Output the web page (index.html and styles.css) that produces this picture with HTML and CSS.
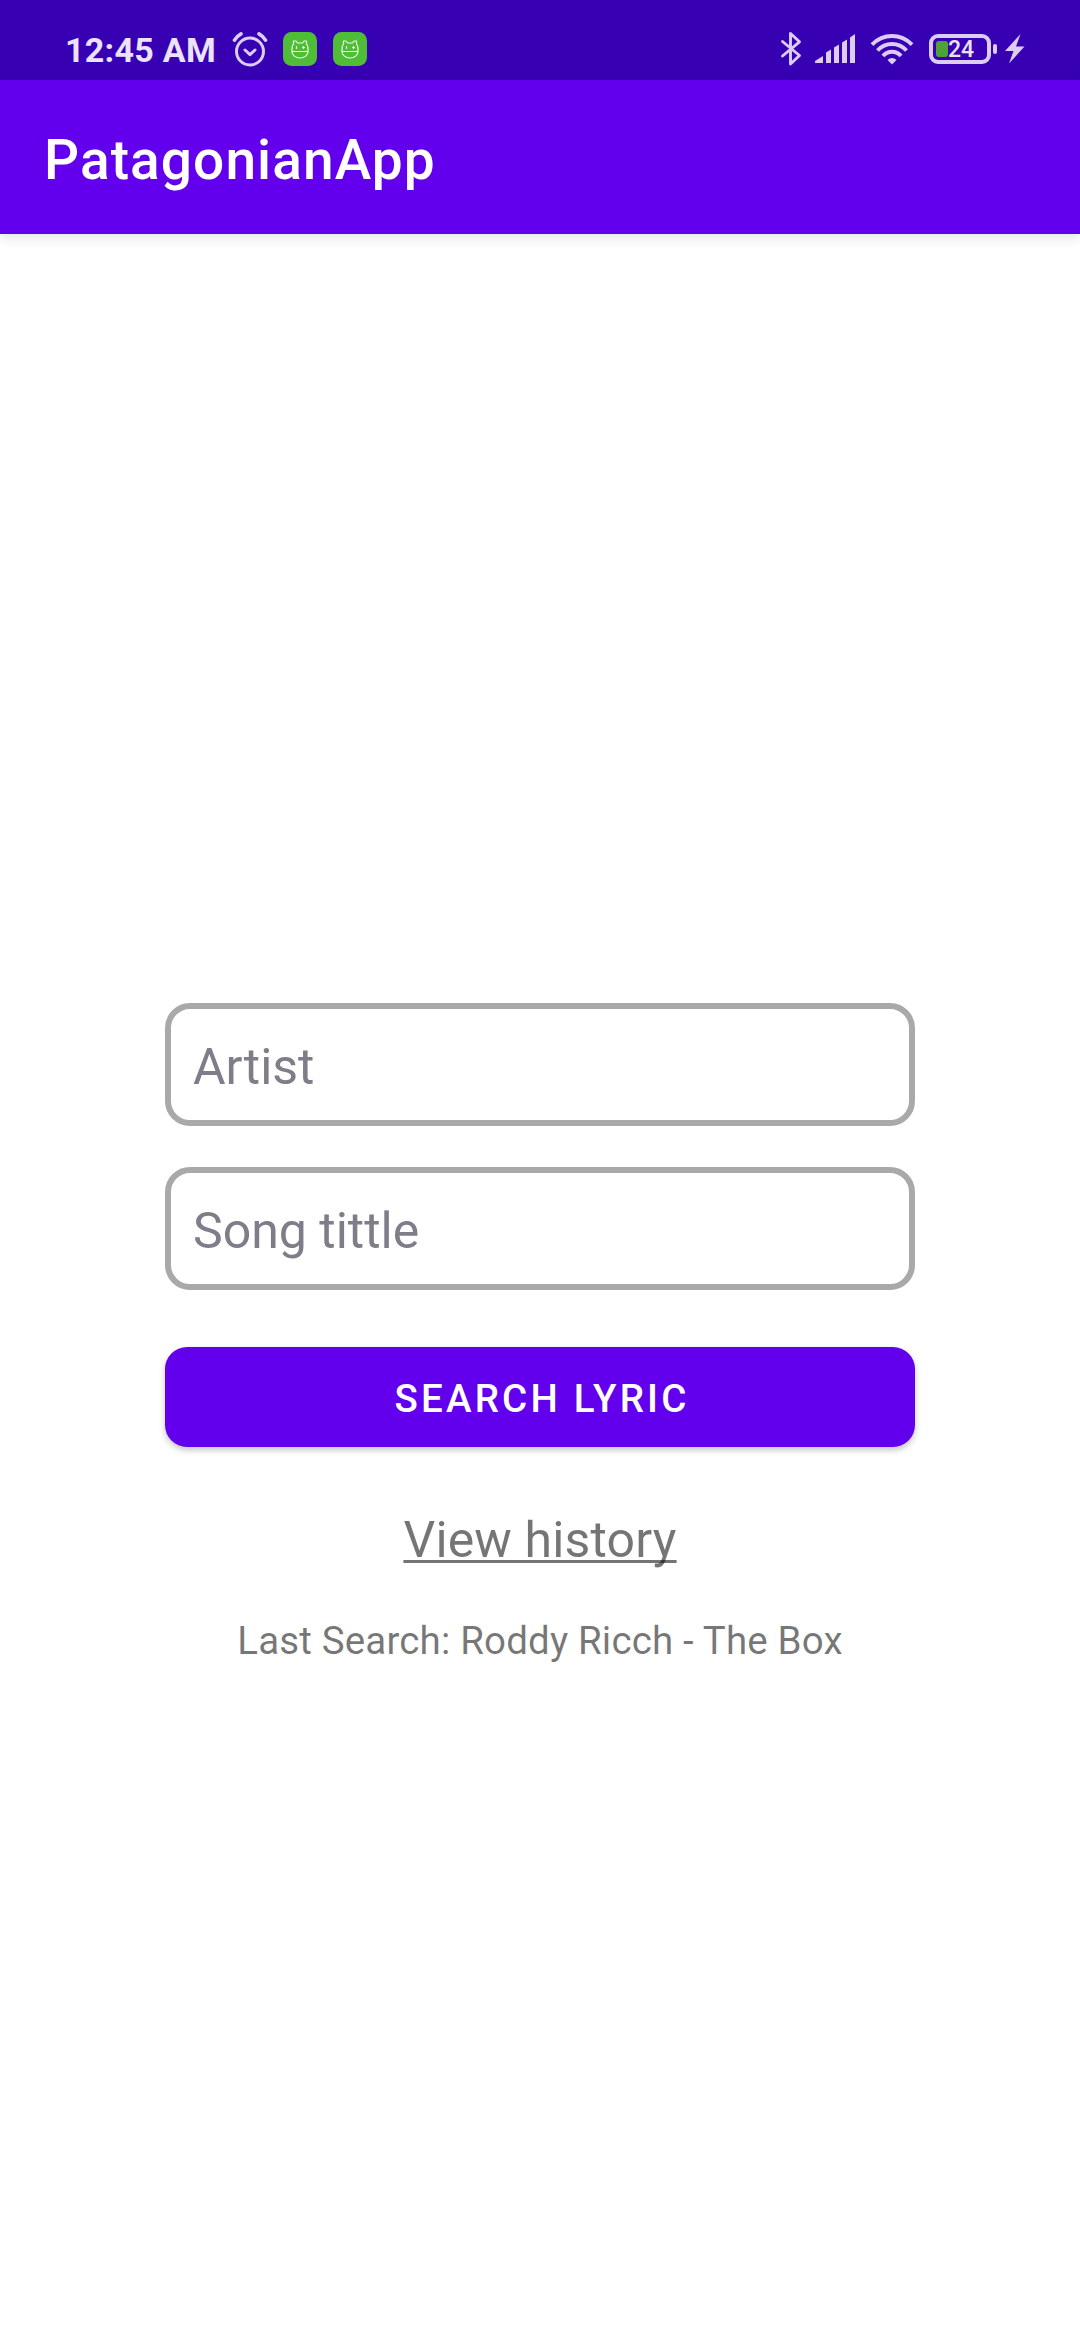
FILE: index.html
```html
<!DOCTYPE html>
<html lang="en">
<head>
<meta charset="utf-8">
<title>PatagonianApp</title>
<link rel="stylesheet" href="styles.css">
</head>
<body>
<div class="status-bar">
  <div class="status-group">
    <span class="clock">12:45 AM</span>
    <svg class="icon alarm" width="36" height="36" viewBox="0 0 36 36" fill="none" stroke="#dccdf6" stroke-linecap="round" stroke-linejoin="round">
      <circle cx="18" cy="20.500" r="13.500" stroke-width="3"/>
      <path d="M13 19l5 4.600 5-4.600" stroke-width="3"/>
      <path d="M2.500 9.200Q5 5 9 2.800M33.500 9.200Q31 5 27 2.800" stroke-width="3.600"/>
    </svg>
    <svg class="icon app-badge" width="34" height="34" viewBox="0 0 34 34">
      <rect width="34" height="34" rx="8.500" fill="#4fbe36"/>
      <g fill="none" stroke="#e9f9e5" stroke-width="1.200" stroke-linejoin="round">
        <path d="M9 19.500V16q0-2 1.500-4V9H13l1.500 2h5L21 9h2.500v3q1.500 2 1.500 4v3.500A8 6.500 0 0 1 9 19.500H25"/>
        <path d="M13.500 14v3M20.500 14v3M19 15.500h3"/>
      </g>
    </svg>
    <svg class="icon app-badge" width="34" height="34" viewBox="0 0 34 34">
      <rect width="34" height="34" rx="8.500" fill="#4fbe36"/>
      <g fill="none" stroke="#e9f9e5" stroke-width="1.200" stroke-linejoin="round">
        <path d="M9 19.500V16q0-2 1.500-4V9H13l1.500 2h5L21 9h2.500v3q1.500 2 1.500 4v3.500A8 6.500 0 0 1 9 19.500H25"/>
        <path d="M13.500 14v3M20.500 14v3M19 15.500h3"/>
      </g>
    </svg>
  </div>
  <div class="status-group">
    <svg class="icon" width="22" height="36" viewBox="0 0 22 36" fill="none" stroke="#dccdf6" stroke-width="2.900" stroke-linejoin="round" stroke-linecap="round">
      <path d="M2.500 10.500L19.500 24.500 10.500 33V2.500l9 8.300L2.500 25"/>
    </svg>
    <svg class="icon signal" width="40" height="30" viewBox="0 0 40 30" fill="#dccdf6">
      <path d="M0 29v-2l8-5v7zM11 29V18.500l5-3V29zM19 29V13.500l5-3V29zM27 29V8.500l5-3V29zM35 29V3.500l5-3.500V29z"/>
    </svg>
    <svg class="icon wifi" width="44" height="32" viewBox="0 0 44 32">
      <g fill="none" stroke="#dccdf6" stroke-width="4">
        <path d="M2 11.600Q10.500 3 22 3T42 11.600"/>
        <path d="M7.500 17.500Q13.500 11 22 11T36.500 17.500"/>
        <path d="M13 23Q16.500 18.700 22 18.700T31 23"/>
      </g>
      <path d="M17.500 27q2-2 4.500-2t4.500 2L22 31.500z" fill="#dccdf6"/>
    </svg>
    <div class="battery"><span class="battery-fill"></span><span class="battery-level">24</span></div>
    <span class="battery-cap"></span>
    <svg class="icon bolt" width="20" height="30" viewBox="0 0 20 30" fill="#dccdf6"><path d="M15.500 0L0 17h8.500L4 29.500 19.500 12.500H11z"/></svg>
  </div>
</div>
<header class="app-bar"><h1 class="app-title">PatagonianApp</h1></header>
<main class="search">
  <input class="field" type="text" placeholder="Artist" aria-label="Artist">
  <input class="field" type="text" placeholder="Song tittle" aria-label="Song tittle">
  <button class="search-button" type="button">SEARCH LYRIC</button>
  <a class="history">View history</a>
  <p class="last-search">Last Search: Roddy Ricch - The Box</p>
</main>
</body>
</html>
```

FILE: styles.css
```css
* {
  box-sizing: border-box;
}

body {
  margin: 0;
  width: 1080px;
  height: 2340px;
  background: #fff;
  font-family: Roboto, sans-serif;
  display: flex;
  flex-direction: column;
  overflow: hidden;
}

.status-bar {
  height: 80px;
  flex: none;
  background: #3700b3;
  padding: 18px 55px 0 65px;
  display: flex;
  justify-content: space-between;
}

.status-group {
  display: flex;
  align-items: center;
  height: 62px;
}

.icon {
  display: block;
  flex: none;
}

.clock {
  margin-top: 2px;
  font-size: 34px;
  font-weight: 700;
  line-height: 40px;
  letter-spacing: 0.3px;
  color: #ebe2fb;
  width: 167px;
  white-space: nowrap;
}

.app-badge {
  margin-left: 15px;
}

.app-badge + .app-badge {
  margin-left: 16px;
}

.signal {
  margin-left: 13px;
}

.wifi {
  margin-left: 15px;
}

.battery {
  width: 62px;
  height: 30px;
  margin-left: 15px;
  border: 4px solid #dccdf6;
  border-radius: 9px;
  padding-left: 3px;
  display: flex;
  align-items: center;
}

.battery-fill {
  width: 12px;
  height: 16px;
  flex: none;
  border-radius: 3px;
  background: #4fa235;
}

.battery-level {
  margin-top: 2px;
  font-size: 23px;
  font-weight: 500;
  line-height: 22px;
  color: #ebe2fb;
}

.battery-cap {
  width: 4px;
  height: 10px;
  margin-left: 2px;
  border-radius: 2px;
  background: #dccdf6;
}

.bolt {
  margin-left: 8px;
}

.app-bar {
  height: 154px;
  flex: none;
  background: #6200ee;
  padding: 0 44px;
  display: flex;
  align-items: center;
  box-shadow: 0 4px 12px rgba(0, 0, 0, 0.11);
}

.app-title {
  margin: 6px 0 0;
  font-size: 55px;
  font-weight: 500;
  line-height: 64px;
  letter-spacing: 1.1px;
  color: #fff;
}

.search {
  width: 750px;
  margin: 769px auto 0;
  display: flex;
  flex-direction: column;
  align-items: center;
}

.field {
  width: 750px;
  height: 123px;
  margin: 0 0 41px;
  padding: 4px 22px 0;
  border: 6px solid #a9a9a9;
  border-radius: 25px;
  background: #fff;
  font-family: inherit;
  font-size: 50px;
  color: #7f7d89;
}

.field::placeholder {
  color: #7f7d89;
  opacity: 1;
}

.search-button {
  width: 750px;
  height: 100px;
  margin: 16px 0 0;
  padding: 3px 0 0 4px;
  border: 0;
  border-radius: 22px;
  background: #6200ee;
  box-shadow: 0 3px 6px rgba(0, 0, 0, 0.24);
  font-family: inherit;
  font-size: 38.5px;
  font-weight: 500;
  letter-spacing: 3.2px;
  color: #fff;
}

.history {
  margin-top: 64px;
  font-size: 50px;
  line-height: 58px;
  letter-spacing: 0.15px;
  color: rgba(0, 0, 0, 0.54);
  text-decoration: underline;
  text-decoration-thickness: 2.5px;
  text-decoration-skip-ink: none;
  text-underline-offset: 3px;
}

.last-search {
  margin: 49px 0 0;
  font-size: 38.5px;
  line-height: 45px;
  letter-spacing: 0.16px;
  color: rgba(0, 0, 0, 0.54);
}
```
